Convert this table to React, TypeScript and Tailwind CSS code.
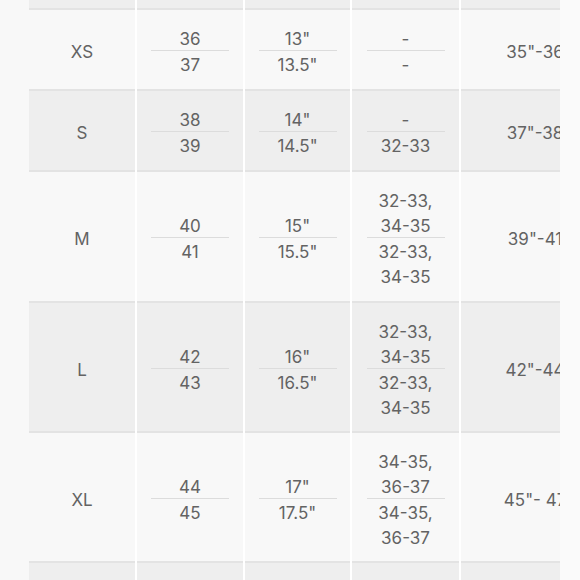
import React from "react";

type Row = {
  size: string;
  a: [string, string];
  b: [string, string];
  c: [string[], string[]];
  d: string;
  tall: boolean;
  shade: boolean;
};

const rows: Row[] = [
  { size: "XS", a: ["36", "37"], b: ['13"', '13.5"'], c: [["-"], ["-"]], d: '35"-36"', tall: false, shade: false },
  { size: "S", a: ["38", "39"], b: ['14"', '14.5"'], c: [["-"], ["32-33"]], d: '37"-38"', tall: false, shade: true },
  { size: "M", a: ["40", "41"], b: ['15"', '15.5"'], c: [["32-33,", "34-35"], ["32-33,", "34-35"]], d: '39"-41"', tall: true, shade: false },
  { size: "L", a: ["42", "43"], b: ['16"', '16.5"'], c: [["32-33,", "34-35"], ["32-33,", "34-35"]], d: '42"-44"', tall: true, shade: true },
  { size: "XL", a: ["44", "45"], b: ['17"', '17.5"'], c: [["34-35,", "36-37"], ["34-35,", "36-37"]], d: '45"- 47"', tall: true, shade: false },
];

function Line({ children }: { children: React.ReactNode }) {
  return <div className="h-[25px] pt-[4px] leading-[21px] whitespace-pre">{children}</div>;
}

function Fraction({ top, bottom }: { top: string[]; bottom: string[] }) {
  return (
    <div className="flex flex-col items-center">
      {top.map((t, i) => (
        <Line key={"t" + i}>{t}</Line>
      ))}
      <div className="w-[78px] h-px bg-[#dcdcdc]" />
      {bottom.map((t, i) => (
        <Line key={"b" + i}>{t}</Line>
      ))}
    </div>
  );
}

function Cell({ w, shade, h, children }: { w: string; shade: boolean; h: string; children?: React.ReactNode }) {
  return (
    <div
      className={`${w} ${h} shrink-0 flex items-center justify-center pt-[2px] border-t-2 border-[#e3e3e3] ${
        shade ? "bg-[#eeeeee]" : "bg-[#f8f8f8]"
      }`}
    >
      {children}
    </div>
  );
}

function EmptyRow({ h, top }: { h: string; top: boolean }) {
  const b = top ? "" : "border-t-2 border-[#e3e3e3]";
  return (
    <div className="flex gap-[2px]">
      <div className={`w-[106px] ${h} shrink-0 bg-[#eeeeee] ${b}`} />
      <div className={`w-[106px] ${h} shrink-0 bg-[#eeeeee] ${b}`} />
      <div className={`w-[105px] ${h} shrink-0 bg-[#eeeeee] ${b}`} />
      <div className={`w-[107px] ${h} shrink-0 bg-[#eeeeee] ${b}`} />
      <div className={`w-[156px] ${h} shrink-0 bg-[#eeeeee] ${b}`} />
    </div>
  );
}

export default function App() {
  return (
    <div
      className="w-[580px] h-[580px] bg-[#fafafa] overflow-hidden flex"
      style={{ fontFamily: "Inter, 'Open Sans', sans-serif" }}
    >
      <div className="w-[29px] shrink-0 bg-[#f8f8f8]" />
      <div className="w-[531px] shrink-0 bg-white overflow-hidden text-[17px] text-[#636363]">
        <div className="w-[590px] flex flex-col">
          <EmptyRow h="h-[8px]" top={true} />
          {rows.map((r, idx) => {
            const h = r.tall ? (idx === 2 ? "h-[131px]" : "h-[130px]") : "h-[81px]";
            return (
              <div key={r.size} className="flex gap-[2px]">
                <Cell w="w-[106px]" shade={r.shade} h={h}>
                  <Line>{r.size}</Line>
                </Cell>
                <Cell w="w-[106px]" shade={r.shade} h={h}>
                  <Fraction top={[r.a[0]]} bottom={[r.a[1]]} />
                </Cell>
                <Cell w="w-[105px]" shade={r.shade} h={h}>
                  <Fraction top={[r.b[0]]} bottom={[r.b[1]]} />
                </Cell>
                <Cell w="w-[107px]" shade={r.shade} h={h}>
                  <Fraction top={r.c[0]} bottom={r.c[1]} />
                </Cell>
                <Cell w="w-[156px]" shade={r.shade} h={h}>
                  <Line>{r.d}</Line>
                </Cell>
              </div>
            );
          })}
          <EmptyRow h="h-[40px]" top={false} />
        </div>
      </div>
    </div>
  );
}
